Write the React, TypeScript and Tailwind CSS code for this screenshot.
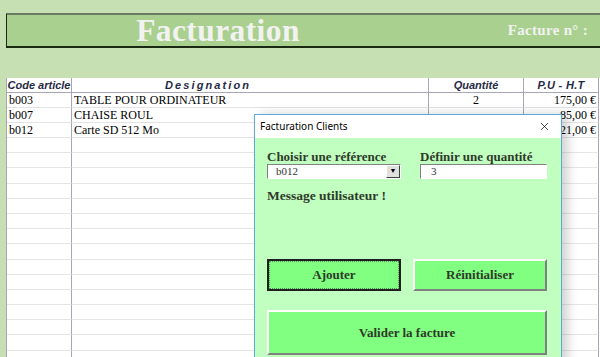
import { X } from "lucide-react";

const rows = [
  { code: "b003", name: "TABLE POUR ORDINATEUR", qty: "2", price: "175,00 €" },
  { code: "b007", name: "CHAISE ROUL", qty: "", price: "85,00 €" },
  { code: "b012", name: "Carte SD 512 Mo", qty: "", price: "21,00 €" },
];

const empty = Array.from({ length: 15 });

const serif = "font-['Liberation_Serif',serif]";

export default function App() {
  return (
    <div className="relative h-[357px] w-[600px] overflow-hidden bg-[#c6e0b4]">
      {/* banner */}
      <div className="pt-[13px] pl-[6px]">
        <div className="flex h-[35px] items-center border-t-2 border-b-2 border-l border-t-[#6b7a63] border-b-[#1a2a12] border-l-[#1a2a12] bg-[#a9d08e]">
          <div className={`w-[422px] text-center text-[31.5px] font-bold leading-none tracking-[0.4px] text-[#f2f2f2] ${serif}`}>
            Facturation
          </div>
          <div className={`ml-auto pr-[12px] text-[15px] font-bold tracking-[0.3px] text-[#f2f2f2] ${serif}`}>
            Facture n° :
          </div>
        </div>
      </div>

      {/* sheet */}
      <div className="mt-[30px] ml-[6px] h-[300px] bg-white">
        <div className="grid grid-cols-[65px_357px_95px_75px] border-l border-[#a6a6b4]">
          <div className="flex h-[15px] items-center justify-center border-r border-b border-[#a6a6b4] font-['Liberation_Sans',sans-serif] text-[11px] font-bold italic text-[#1f2a44]">
            Code article
          </div>
          <div className="flex h-[15px] items-center border-r border-b border-[#a6a6b4] pl-[93px] font-['Liberation_Sans',sans-serif] text-[11px] font-bold italic tracking-[2.1px] text-[#1f2a44]">
            Designation
          </div>
          <div className="flex h-[15px] items-center justify-center border-r border-b border-[#a6a6b4] font-['Liberation_Sans',sans-serif] text-[11px] font-bold italic text-[#1f2a44]">
            Quantité
          </div>
          <div className="flex h-[15px] items-center justify-center border-r border-b border-[#a6a6b4] font-['Liberation_Sans',sans-serif] text-[11px] font-bold italic tracking-[0.3px] text-[#1f2a44]">
            P.U  -  H.T
          </div>

          {rows.map((r) => (
            <div key={r.code} className={`contents text-[12px] text-black ${serif}`}>
              <div className="flex h-[15px] items-center border-r border-b border-r-[#a6a6b4] border-b-[#e3e3e3] pl-[2px]">
                {r.code}
              </div>
              <div className="flex h-[15px] items-center border-r border-b border-r-[#a6a6b4] border-b-[#e3e3e3] pl-[2px]">
                {r.name}
              </div>
              <div className="flex h-[15px] items-center justify-center border-r border-b border-r-[#a6a6b4] border-b-[#e3e3e3]">
                {r.qty}
              </div>
              <div className="flex h-[15px] items-center justify-end border-r border-b border-r-[#a6a6b4] border-b-[#e3e3e3] pr-[2px]">
                {r.price}
              </div>
            </div>
          ))}

          {empty.map((_, i) => (
            <div key={i} className="contents">
              <div className="h-[15.2px] border-r border-b border-r-[#a6a6b4] border-b-[#e6e6e6]" />
              <div className="h-[15.2px] border-r border-b border-r-[#a6a6b4] border-b-[#e6e6e6]" />
              <div className="h-[15.2px] border-r border-b border-r-[#a6a6b4] border-b-[#e6e6e6]" />
              <div className="h-[15.2px] border-r border-b border-r-[#a6a6b4] border-b-[#e6e6e6]" />
            </div>
          ))}
        </div>
      </div>

      {/* dialog */}
      <div className="absolute top-[114px] left-[254px] h-[260px] w-[308px] border border-[#5ea8d8] bg-[#c0ffc0] shadow-[6px_0_10px_rgba(0,0,0,0.18)]">
        <div className="flex h-[23px] items-center justify-between bg-white pr-[10px] pl-[5px] font-['Noto_Sans',sans-serif] text-[10px] text-black">
          <span>Facturation Clients</span>
          <X size={13} strokeWidth={1.3} />
        </div>

        <div className={`px-[12px] pt-[12px] text-[#2f3a2a] ${serif}`}>
          <div className="grid grid-cols-[134px_127px] gap-x-[19px]">
            <div>
              <div className="text-[13px] leading-[13px] font-bold">Choisir une référence</div>
              <div className="mt-[1px] flex h-[15px] border border-t-[#808080] border-l-[#808080] border-r-white border-b-white bg-white">
                <span className="flex-1 pl-[8px] text-[11px] leading-[13px] text-[#333]">b012</span>
                <span className="flex w-[14px] items-center justify-center border border-t-white border-l-white border-r-[#404040] border-b-[#404040] bg-[#e0e0e0] text-[7px] text-black">
                  ▼
                </span>
              </div>
            </div>
            <div>
              <div className="text-[13px] leading-[13px] font-bold">Définir une quantité</div>
              <div className="mt-[1px] h-[15px] border border-t-[#808080] border-l-[#808080] border-r-white border-b-white bg-white pl-[10px] text-[11px] leading-[13px] text-[#333]">
                3
              </div>
            </div>
          </div>

          <div className="mt-[10px] text-[13.5px] leading-[14px] font-bold">Message utilisateur !</div>

          <div className="mt-[56px] grid grid-cols-[134px_134px] gap-x-[12px]">
            <button className="flex h-[32px] items-center justify-center border-2 border-[#202020] bg-[#80ff80] text-[13px] font-bold text-[#2f3a2a]">
              <span className="flex h-full w-full items-center justify-center border border-dotted border-[#5a8a5a]">
                Ajouter
              </span>
            </button>
            <button className="flex h-[32px] items-center justify-center border-2 border-t-white border-l-white border-r-[#808080] border-b-[#808080] bg-[#80ff80] text-[13px] font-bold text-[#2f3a2a]">
              Réinitialiser
            </button>
          </div>

          <button className="mt-[19px] flex h-[45px] w-[280px] items-center justify-center border-2 border-t-white border-l-white border-r-[#808080] border-b-[#808080] bg-[#80ff80] text-[13px] font-bold text-[#2f3a2a]">
            Valider la facture
          </button>
        </div>
      </div>
    </div>
  );
}
